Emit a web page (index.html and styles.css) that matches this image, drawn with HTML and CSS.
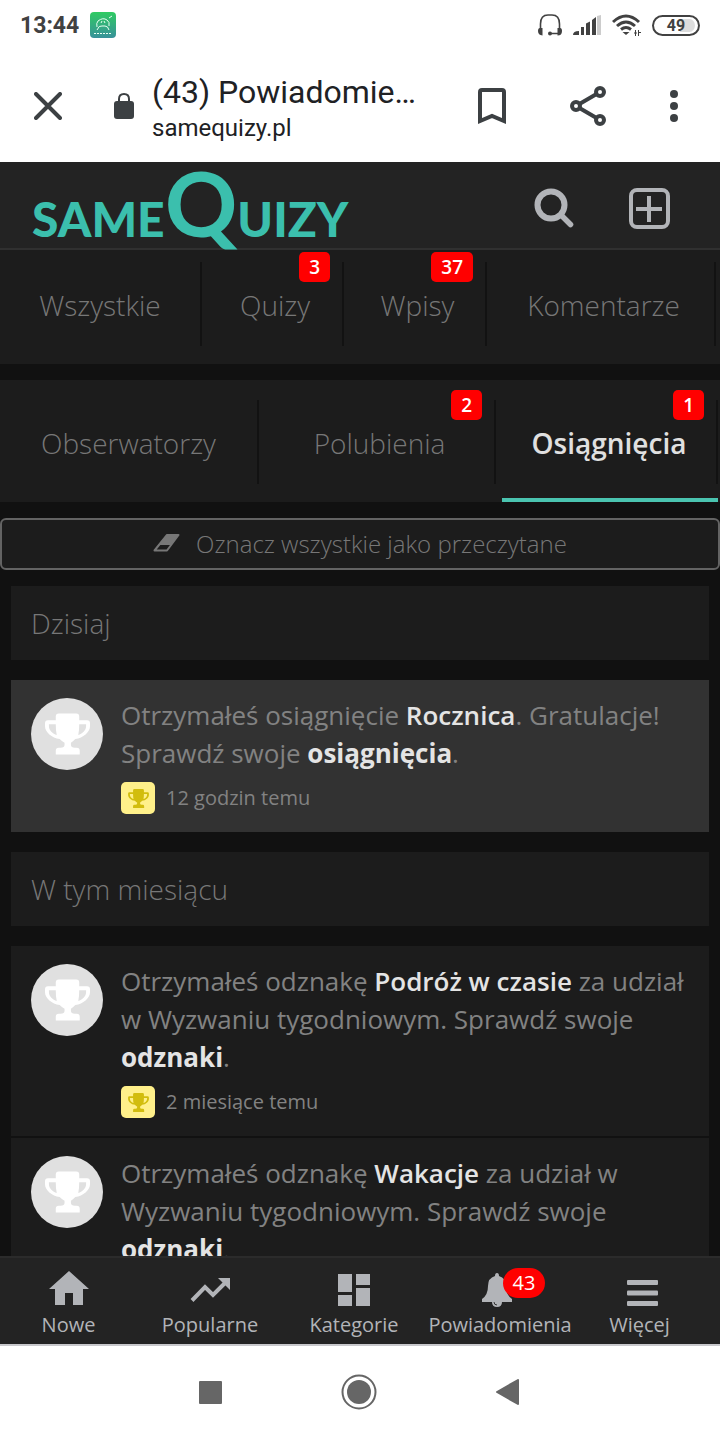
FILE: index.html
```html
<!DOCTYPE html>
<html lang="pl">
<head>
<meta charset="utf-8">
<meta name="viewport" content="width=device-width, initial-scale=1">
<title>(43) Powiadomienia</title>
<link rel="stylesheet" href="styles.css">
</head>
<body>
<svg class="defs" aria-hidden="true">
  <symbol id="trophy" viewBox="0 0 46 42">
    <path fill="currentColor" d="M14 0h18q3 0 3 3v4h8q3 0 3 3v3c0 6-7 12-15 13q-3 3-4.500 4v2q0 3 4 3h2q3 0 3 3v4H11v-4q0-3 3-3h2q4 0 4-3v-2q-2-1-5-4C7 25 0 19 0 13v-3q0-3 3-3h8V3q0-3 3-3zM4 11v2c0 4 4 8 8 9q-1-4-1-11zm31 0q0 7-1 11c4-1 8-5 8-9v-2z"/>
  </symbol>
</svg>

<div class="status">
  <span class="clock">13:44</span>
  <svg class="app" width="26" height="26" viewBox="0 0 26 26"><defs><linearGradient id="g" x2="0" y2="1"><stop stop-color="#2fcb62"/><stop offset="1" stop-color="#38919a"/></linearGradient></defs><rect width="26" height="26" rx="4" fill="url(#g)"/><path d="M7 15q-1-4 1-6 5-4 9-1 3 2 2 6M7 18q2-5 5-4h3q3 0 4 4M11 11l1-2M14 9l1 2M19 6l3-2" fill="none" stroke="#e8fff2"/><path d="M4 21.500h18" stroke="#e8fff2" stroke-dasharray="2 1"/></svg>
  <span class="signals">
    <svg width="24" height="24" viewBox="0 0 24 24"><path d="M2.500 18V11Q2.500 2 10 2h4q7.500 0 7.500 9v9.500h-9" fill="none" stroke="#414141" stroke-width="1.600"/><path d="M0 18q0-3 2-3h2.500v7.500Q0 22 0 18zM24 18q0-3-2-3h-2.500v7.500q4.500 0 4.500-4.500z" fill="#414141"/><circle cx="12" cy="20.500" r="2" fill="#414141"/></svg>
    <svg width="28" height="20" viewBox="0 0 28 20"><path d="M0 20q0-4 6-4v4zM8 12h3v8H8zM13 8.500l4-2V20h-4zM19 5l4-3v18h-4z" fill="#414141"/><path d="M24 1l4-1v20h-4z" fill="#ccc"/></svg>
    <svg width="29" height="23" viewBox="0 0 29 23"><path d="M1 8q13-12 26 0M5 12q9-8 18 0M9 15.500q5-4 10 0" fill="none" stroke="#414141" stroke-width="3"/><path d="M10.500 18h7L14 21z" fill="#414141"/><path d="M23.500 16v6M26.500 16v6M22 19h3M26 18.500h3" stroke="#414141"/></svg>
    <span class="battery">49</span>
  </span>
</div>

<div class="browser">
  <button class="plain" aria-label="Zamknij"><svg width="28" height="28" viewBox="0 0 28 28"><path d="M2 2l24 24M26 2L2 26" stroke="#3c4043" stroke-width="4" stroke-linecap="round"/></svg></button>
  <svg class="lock" width="20" height="26" viewBox="0 0 20 26"><rect y="8" width="20" height="18" rx="3" fill="#3c4043"/><path d="M5 9V6q0-5 5-5t5 5v3" fill="none" stroke="#3c4043" stroke-width="2"/></svg>
  <div class="address"><div class="page-title">(43) Powiadomie…</div><div class="host">samequizy.pl</div></div>
  <div class="actions">
    <button class="plain" aria-label="Zakładka"><svg width="28" height="36" viewBox="0 0 28 36"><path d="M2 33V4q0-2 2-2h20q2 0 2 2v29l-12-5z" fill="none" stroke="#3c4043" stroke-width="4"/></svg></button>
    <button class="plain" aria-label="Udostępnij"><svg width="36" height="40" viewBox="0 0 36 40"><path d="M6 20L30 6M6 20l24 14" stroke="#3c4043" stroke-width="4"/><g fill="#fff" stroke="#3c4043" stroke-width="4"><circle cx="6" cy="20" r="4"/><circle cx="30" cy="6" r="4"/><circle cx="30" cy="34" r="4"/></g></svg></button>
    <button class="plain" aria-label="Menu"><svg width="8" height="32" viewBox="0 0 8 32"><g fill="#3c4043"><circle cx="4" cy="4" r="4"/><circle cx="4" cy="16" r="4"/><circle cx="4" cy="28" r="4"/></g></svg></button>
  </div>
</div>

<header class="site">
  <a class="logo" href="#" aria-label="SameQuizy"><span>SAME</span><span class="logo-q">Q</span><span>UIZY</span></a>
  <div class="tools">
    <button class="plain" aria-label="Szukaj"><svg width="40" height="40" viewBox="0 0 40 40"><circle cx="17" cy="17" r="13.500" fill="none" stroke="#b2b4b8" stroke-width="6"/><path d="M27 27l9.500 9.500" stroke="#b2b4b8" stroke-width="5.500" stroke-linecap="round"/></svg></button>
    <button class="plain" aria-label="Dodaj"><svg width="41" height="41" viewBox="0 0 41 41"><rect x="2" y="2" width="37" height="37" rx="6" fill="none" stroke="#b2b4b8" stroke-width="4"/><path d="M20 8v26M7 21h26" stroke="#b2b4b8" stroke-width="4"/></svg></button>
  </div>
</header>

<main>
  <nav class="tabs tabs-first">
    <a class="tab" href="#">Wszystkie</a>
    <a class="tab" href="#">Quizy<span class="count">3</span></a>
    <a class="tab" href="#">Wpisy<span class="count">37</span></a>
    <a class="tab" href="#">Komentarze</a>
  </nav>
  <nav class="tabs tabs-second">
    <a class="tab" href="#">Obserwatorzy</a>
    <a class="tab" href="#">Polubienia<span class="count">2</span></a>
    <a class="tab active" href="#">Osiągnięcia<span class="count">1</span></a>
  </nav>
  <button class="mark"><svg width="27" height="18" viewBox="0 0 27 18"><path d="M14 1h11.500L14 16.500H1.500z" fill="none" stroke="#777" stroke-width="2" stroke-linejoin="round"/><path d="M14 1h11.500L18 11H6z" fill="#777"/></svg>Oznacz wszystkie jako przeczytane</button>

  <div class="feed">
    <h2 class="period">Dzisiaj</h2>
    <section class="group">
      <article class="note unread">
        <span class="avatar"><svg width="45" height="42"><use href="#trophy"/></svg></span>
        <div class="note-body">
          <p>Otrzymałeś osiągnięcie <a class="semi" href="#">Rocznica</a>. Gratulacje! Sprawdź swoje <a href="#">osiągnięcia</a>.</p>
          <div class="meta"><span class="chip"><svg width="21" height="19"><use href="#trophy"/></svg></span><time>12 godzin temu</time></div>
        </div>
      </article>
    </section>
    <h2 class="period">W tym miesiącu</h2>
    <section class="group">
      <article class="note">
        <span class="avatar"><svg width="45" height="42"><use href="#trophy"/></svg></span>
        <div class="note-body">
          <p>Otrzymałeś odznakę <a class="semi" href="#">Podróż w czasie</a> za udział w Wyzwaniu tygodniowym. Sprawdź swoje <a href="#">odznaki</a>.</p>
          <div class="meta"><span class="chip"><svg width="21" height="19"><use href="#trophy"/></svg></span><time>2 miesiące temu</time></div>
        </div>
      </article>
      <article class="note">
        <span class="avatar"><svg width="45" height="42"><use href="#trophy"/></svg></span>
        <div class="note-body">
          <p>Otrzymałeś odznakę <a class="semi" href="#">Wakacje</a> za udział w Wyzwaniu tygodniowym. Sprawdź swoje <a href="#">odznaki</a>.</p>
        </div>
      </article>
    </section>
  </div>
</main>

<nav class="dock">
  <a href="#"><span class="dock-icon dock-home"><svg width="40" height="34" viewBox="0 0 40 34"><path d="M20 0l20 18h-6v16H24V22h-8v12H6V18H0z" fill="#b2b4b8"/></svg></span>Nowe</a>
  <a href="#"><span class="dock-icon"><svg width="40" height="24" viewBox="0 0 40 24"><path d="M2 22.500L15 9l8 8L35 5" fill="none" stroke="#b2b4b8" stroke-width="4"/><path d="M28 0h12v12z" fill="#b2b4b8"/></svg></span>Popularne</a>
  <a href="#"><span class="dock-icon"><svg width="32" height="32" viewBox="0 0 32 32"><path d="M0 0h14v18H0zM0 21h14v11H0zM18 0h14v11H18zM18 14h14v18H18z" fill="#b2b4b8"/></svg></span>Kategorie</a>
  <a href="#"><span class="dock-icon dock-bell"><svg width="32" height="34" viewBox="0 0 32 34"><path d="M16 0q2 0 2 3 7 2 7 10 0 9 6 13v3H21q0 5-5 5t-5-5H1v-3q6-4 6-13 0-8 7-10 0-3 2-3z" fill="#b2b4b8"/><path d="M13 29q0 3 3 3" fill="none" stroke="#333"/></svg><span class="bubble">43</span></span>Powiadomienia</a>
  <a href="#"><span class="dock-icon dock-more"><svg width="31" height="26" viewBox="0 0 31 26"><g fill="#b2b4b8"><rect width="31" height="5" rx="1"/><rect y="10.500" width="31" height="5" rx="1"/><rect y="21" width="31" height="5" rx="1"/></g></svg></span>Więcej</a>
</nav>

<div class="system">
  <button class="plain" aria-label="Ostatnie"><svg width="23" height="23"><rect width="23" height="23" rx="1" fill="#666"/></svg></button>
  <button class="plain" aria-label="Ekran główny"><svg width="36" height="36" viewBox="0 0 36 36"><circle cx="18" cy="18" r="16.500" fill="none" stroke="#666" stroke-width="2"/><circle cx="18" cy="18" r="12" fill="#666"/></svg></button>
  <button class="plain" aria-label="Wstecz"><svg width="23" height="26" viewBox="0 0 23 26"><path d="M1 13L22 1v24z" fill="#666" stroke="#666" stroke-width="2" stroke-linejoin="round"/></svg></button>
</div>
</body>
</html>
```
FILE: styles.css
```css
* { box-sizing: border-box; }

body {
  margin: 0;
  height: 100vh;
  display: flex;
  flex-direction: column;
  background: #111;
  font-family: "Open Sans", "Noto Sans", sans-serif;
}

svg { display: block; flex: none; }
.defs { position: absolute; width: 0; height: 0; }
a { color: inherit; text-decoration: none; }
button { font: inherit; cursor: pointer; }
.plain { padding: 0; border: 0; background: none; }

/* Phone status bar */
.status {
  flex: none;
  height: 50px;
  padding: 0 20px;
  display: flex;
  align-items: center;
  gap: 11px;
  background: #fff;
  color: #414141;
  font-family: Roboto, sans-serif;
}
.clock { font-size: 23px; font-weight: 700; }
.signals { margin-left: auto; display: flex; align-items: center; gap: 11px; }
.battery {
  width: 48px;
  height: 21px;
  border: 2px solid #414141;
  border-radius: 11px;
  background: linear-gradient(90deg, #fff 60%, #ddd 60%) content-box;
  padding: 2px 3px;
  font-size: 16px;
  font-weight: 700;
  line-height: 14px;
  text-align: center;
}

/* Browser bar */
.browser {
  flex: none;
  height: 112px;
  padding: 0 42px 0 34px;
  display: flex;
  align-items: center;
  background: #fff;
  color: #202124;
  font-family: Roboto, sans-serif;
}
.lock { margin-left: 52px; }
.address { margin-left: 18px; padding-top: 4px; min-width: 0; white-space: nowrap; }
.page-title { font-size: 32px; line-height: 40px; }
.host { font-size: 24px; line-height: 32px; }
.actions { margin-left: auto; display: flex; align-items: center; gap: 64px; }

/* Site header */
.site {
  flex: none;
  height: 88px;
  padding: 0 50px 0 32px;
  display: flex;
  align-items: center;
  justify-content: space-between;
  background: #232323;
  border-bottom: 2px solid #303030;
}
.logo {
  display: flex;
  align-items: baseline;
  padding-top: 10px;
  color: #3bbfad;
  font-family: Lato, sans-serif;
  font-size: 48px;
  font-weight: 900;
  line-height: 80px;
}
.logo-q { font-size: 90px; font-weight: 700; }
.tools { display: flex; align-items: center; gap: 55px; padding-top: 6px; }

main { flex: 1; min-height: 0; overflow: hidden; }

/* Tabs */
.tabs {
  display: grid;
  gap: 6px;
  background: #1c1c1c;
  color: #777;
  font-size: 28px;
  font-weight: 300;
}
.tabs-first { grid-template-columns: 202fr 136fr 137fr 223fr; padding: 12px 4px 18px 0; }
.tabs-second { grid-template-columns: 259fr 231fr 216fr; padding: 20px 2px 18px 0; margin-top: 16px; }
.tab {
  position: relative;
  height: 84px;
  line-height: 86px;
  text-align: center;
  border-right: 2px solid #121212;
}
.active { color: #e0e0e0; font-weight: 600; }
.active::after {
  content: "";
  position: absolute;
  left: 0;
  right: -2px;
  bottom: -18px;
  height: 4px;
  background: #4ac4b0;
}
.count {
  position: absolute;
  top: -10px;
  right: 12px;
  padding: 0 10px;
  border-radius: 5px;
  background: #f00;
  color: #fff;
  font-size: 19px;
  font-weight: 600;
  line-height: 30px;
}

.mark {
  width: 100%;
  height: 52px;
  margin: 16px 0;
  padding: 0 0 2px;
  display: flex;
  align-items: center;
  justify-content: center;
  gap: 16px;
  background: #1c1c1c;
  border: 2px solid #636363;
  border-radius: 6px;
  color: #777;
  font-size: 24px;
  font-weight: 300;
}

/* Notifications */
.feed { display: flex; flex-direction: column; gap: 20px; padding: 0 11px; }
.period {
  margin: 0;
  padding: 0 20px;
  background: #1c1c1c;
  color: #777;
  font-size: 28px;
  font-weight: 300;
  line-height: 74px;
}
.group { display: flex; flex-direction: column; gap: 2px; }
.note { display: flex; gap: 18px; padding: 16px 20px 18px; background: #1c1c1c; color: #828282; }
.unread { background: #323232; }
.avatar {
  flex: none;
  width: 72px;
  height: 72px;
  margin-top: 2px;
  display: flex;
  align-items: center;
  justify-content: center;
  border-radius: 50%;
  background: #e0e0e0;
  color: #fff;
}
.note p { margin: 0; font-size: 26px; line-height: 38px; }
.note p a { color: #e4e4e4; font-weight: 700; }
.note p .semi { font-weight: 600; }
.meta { display: flex; align-items: center; gap: 11px; margin-top: 10px; font-size: 20px; line-height: 32px; }
.chip {
  width: 34px;
  height: 32px;
  display: flex;
  align-items: center;
  justify-content: center;
  border-radius: 5px;
  background: #fff08a;
  color: #d2bd0d;
}

/* Bottom navigation */
.dock {
  flex: none;
  display: grid;
  grid-template-columns: 137fr 146fr 142fr 150fr 129fr;
  padding: 10px 16px 4px 0;
  height: 90px;
  background: #232323;
  border-top: 2px solid #2b2b2b;
  border-bottom: 2px solid #c8c8cc;
  color: #b2b4b8;
  font-size: 20px;
  line-height: 24px;
}
.dock a { display: flex; flex-direction: column; align-items: center; gap: 1px; }
.dock-icon { position: relative; height: 44px; display: flex; align-items: center; }
.dock-home { padding-bottom: 5px; }
.dock-bell { padding-right: 7px; }
.dock-more { padding: 6px 0 0 6px; }
.bubble {
  position: absolute;
  left: 22px;
  top: 0;
  padding: 0 10px;
  border-radius: 15px;
  background: #f00;
  color: #fff;
  line-height: 30px;
}

/* System buttons */
.system {
  flex: none;
  height: 94px;
  padding: 0 3px 2px 0;
  display: flex;
  align-items: center;
  justify-content: center;
  gap: 119px;
  background: #fff;
}
```
